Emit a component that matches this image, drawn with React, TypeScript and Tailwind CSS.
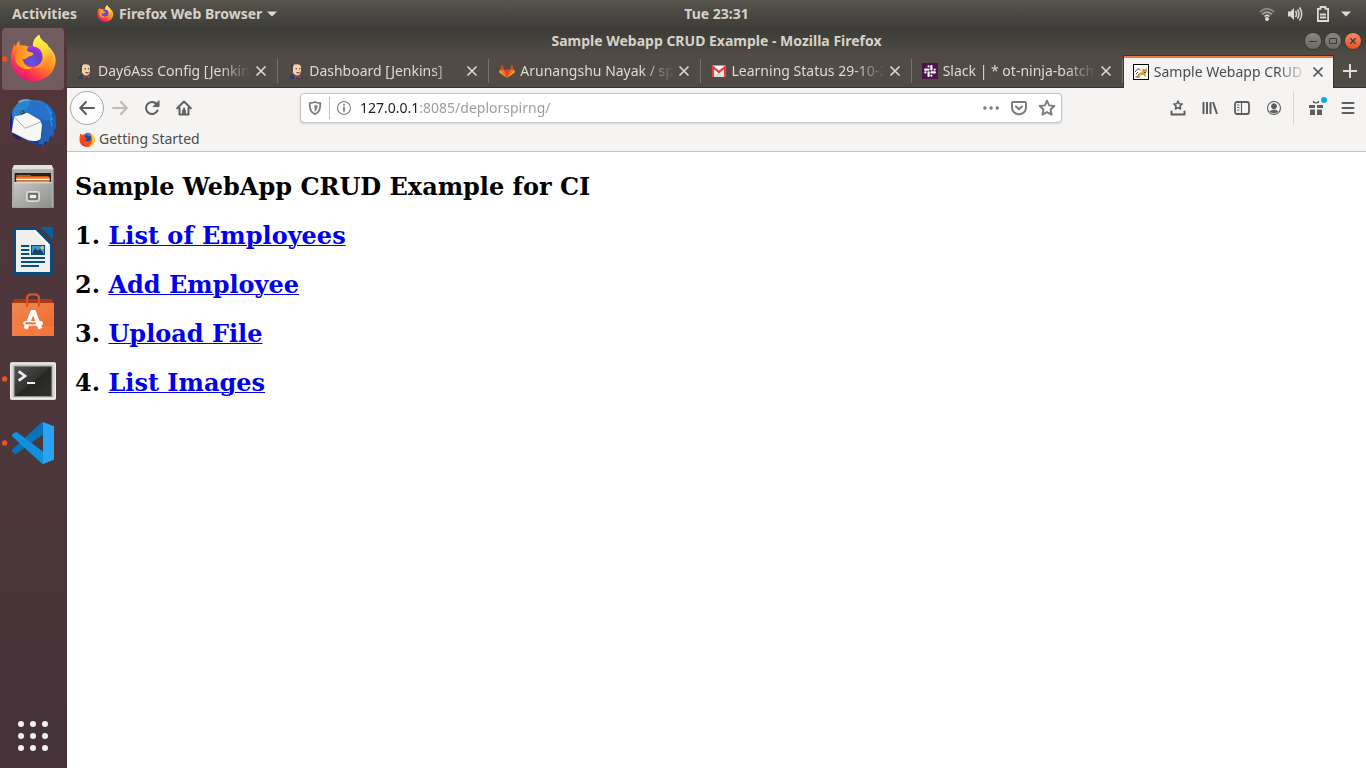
import React, { useState } from "react";

type IconProps = { className?: string };

function FirefoxArt({ id }: { id: string }) {
  return (
    <g>
      <defs>
        <linearGradient id={`${id}-body`} x1="0.85" y1="0.1" x2="0.3" y2="1">
          <stop offset="0" stopColor="#fff44f" />
          <stop offset="0.3" stopColor="#ffb52c" />
          <stop offset="0.55" stopColor="#ff7a25" />
          <stop offset="0.78" stopColor="#ff3750" />
          <stop offset="1" stopColor="#e3127c" />
        </linearGradient>
        <radialGradient id={`${id}-globe`} cx="0.45" cy="0.75" r="0.8">
          <stop offset="0" stopColor="#5b5be0" />
          <stop offset="0.55" stopColor="#6f38cf" />
          <stop offset="1" stopColor="#b833e1" />
        </radialGradient>
        <linearGradient id={`${id}-head`} x1="0" y1="0" x2="1" y2="0.3">
          <stop offset="0" stopColor="#ff7f1e" />
          <stop offset="1" stopColor="#ffb52c" />
        </linearGradient>
        <linearGradient id={`${id}-flame`} x1="0.3" y1="0" x2="0.6" y2="1">
          <stop offset="0" stopColor="#fff44f" />
          <stop offset="0.5" stopColor="#ffd83a" />
          <stop offset="1" stopColor="#ff7d25" />
        </linearGradient>
      </defs>
      <path
        d="M53 37C51 46 52 50 56 53C64 52 74 53 81 57L93 54C93 40 98 28 112 20C114 34 124 40 134 47C136 47 137 51 138 54C149 63 161 79 161 96C161 133 131 160 94 160C57 160 27 131 27 94C27 76 31 63 38 47L41 58C43 49 47 42 53 37Z"
        fill={`url(#${id}-body)`}
      />
      <circle cx="92" cy="85" r="31" fill={`url(#${id}-globe)`} />
      <path
        d="M112 20C100 27 91 41 93 55C111 58 122 70 122 87C122 103 110 115 96 118C117 122 142 114 150 92C154 85 152 74 149 69L147 78C145 67 138 53 134 47C126 40 114 35 112 20Z"
        fill={`url(#${id}-flame)`}
      />
      <path
        d="M56 53C64 52 74 54 79 60C71 63 75 70 84 72C89 73 95 74 94 79C90 85 82 84 75 90C69 93 67 95 61 93C63 109 74 118 91 119C77 128 48 122 40 98C38 84 43 73 49 69C46 62 48 57 56 53Z"
        fill={`url(#${id}-head)`}
      />
    </g>
  );
}

function FirefoxIcon() {
  return (
    <svg viewBox="24 18 142 144" className="size-[17px]" aria-hidden="true">
      <FirefoxArt id="ffmenu" />
    </svg>
  );
}

function FirefoxOldIcon() {
  return (
    <svg viewBox="0 0 16 16" className="size-4" aria-hidden="true">
      <circle cx="8.2" cy="8.2" r="5.5" fill="#1d48c4" />
      <path d="M6 2.5C8 1 12 1.5 13 4.500L9 5Z" fill="#1b8fe8" />
      <path d="M1.500 2.500L3 4C4 3 5.500 3.200 6.500 4L5.500 6.500L8 7L6.500 9C8 11 11 11 12 8C12 6 11.500 4 10 1.500C14 3 16 6 15.500 9.500C15 13.500 12 15.800 8 15.800C4 15.800.7 13 .5 9C.4 6 .8 4 1.500 2.500Z" fill="#ff4a16" />
      <path d="M10.500 1.500C14 3 16 6 15.500 9.500C15 12.500 13 15 10 15.500C14 12 14 6 10.500 1.500Z" fill="#ffd21f" />
      <path d="M1 10C2 14 6 16 10 15.300C6 15 3 13.500 1 10Z" fill="#e6163f" />
    </svg>
  );
}

function ThunderbirdArt() {
  return (
    <g>
      <defs>
        <linearGradient id="tb-blue" x1="0.2" y1="0" x2="0.8" y2="1">
          <stop offset="0" stopColor="#2a9fd8" />
          <stop offset="0.45" stopColor="#1f64c0" />
          <stop offset="1" stopColor="#1c2f7c" />
        </linearGradient>
      </defs>
      <path d="M54 30C66 22 78 20 87 26C123 18 153 43 162 72C168 104 153 145 116 164C109 163 104 158 96 157L30 122C19 104 17 76 32 56C36 47 43 36 54 30Z" fill="url(#tb-blue)" />
      <path d="M31 56C20 76 18 104 32 126L42 140L60 145L31 111Z" fill="#29206e" />
      <path d="M37 73L76 62L121 88L116 140C104 151 91 146 79 145L29 121Z" fill="#f7f7f5" />
      <path d="M38 76L69 109L121 88" fill="none" stroke="#9da0a6" strokeWidth="2.500" />
      <path d="M86 27C129 26 151 57 154 91C147 117 132 141 111 151C127 123 128 91 105 71C96 62 86 66 72 58Z" fill="#2770cb" />
      <path d="M112 79C126 105 124 132 108 158L117 155L121 161L130 147L139 151L144 133L154 134L157 112L163 109L160 68C151 86 135 93 112 79Z" fill="#2361b7" />
      <path d="M35 50C49 36 57 31 73 25C80 22 88 23 93 27C83 26 77 30 75 36C71 48 72 58 64 67C55 73 42 69 36 76C32 77 29 70 35 50Z" fill="#2b83cc" />
      <path d="M49 28C62 19 79 20 91 27C78 24 62 26 49 33Z" fill="#77b9d8" />
      <path d="M132 42L150 65L143 62L151 82L145 80L150 103" fill="none" stroke="#2990d5" strokeWidth="4" />
      <circle cx="62" cy="61" r="6" fill="#17305a" />
      <circle cx="61" cy="61" r="3" fill="#aa9256" />
    </g>
  );
}

function FilesArt() {
  return (
    <g>
      <defs>
        <linearGradient id="files-front" x1="0" y1="0" x2="1" y2="1">
          <stop offset="0" stopColor="#c6c6c4" />
          <stop offset="1" stopColor="#8d8d8b" />
        </linearGradient>
      </defs>
      <path d="M36 27H149L155 39V155H30V39Z" fill="#aeaeac" />
      <path d="M36 27H149L154 40H31Z" fill="#e2e2df" />
      <path d="M38 51H147V80H38Z" fill="#2c2019" />
      <path d="M43 57H84L88 60H140V69H43Z" fill="#c65a1a" />
      <path d="M43 64H143V69H43Z" fill="#f07b27" />
      <path d="M42 68H143V73H42Z" fill="#fff0d2" />
      <path d="M43 73H143V79H43Z" fill="#e58b43" />
      <path d="M36 79H149V155H36Z" fill="url(#files-front)" />
      <path d="M36 79H149V82H36Z" fill="#e5e5e2" />
      <rect x="74" y="107" width="38" height="29" rx="5" fill="#bcbcba" stroke="#e8e8e6" strokeWidth="3" />
      <rect x="81" y="114" width="24" height="15" fill="#eee" stroke="#4b4b49" strokeWidth="4" />
    </g>
  );
}

function WriterArt() {
  return (
    <g>
      <path d="M39 21H104L153 70V159Q153 165 147 165H39Q33 165 33 159V27Q33 21 39 21Z" fill="#0b4b78" />
      <path d="M114 21H147Q153 21 153 27V58Z" fill="#09629e" />
      <path d="M42 30H100L144 74V156H42Z" fill="#eeeeec" />
      <path d="M100 30L144 74L135 81L93 30Z" fill="#fff" />
      <g fill="#074f7f">
        <path d="M57 75H82V81H57ZM57 87H82V93H57ZM57 99H82V105H57ZM57 111H129V117H57ZM57 123H129V129H57ZM57 135H111V141H57Z" />
        <path d="M87 75H129V105H87Z" />
      </g>
      <path d="M90 78H126V102H90Z" fill="#3f9ad1" />
      <path d="M90 101L99 84L106 92L114 87L126 102Z" fill="#1b3e52" />
      <circle cx="121" cy="83" r="5" fill="#ecc543" />
    </g>
  );
}

function SoftwareArt() {
  return (
    <g>
      <defs>
        <linearGradient id="bag" x1="0" y1="0" x2="1" y2="1">
          <stop offset="0" stopColor="#ed8a56" />
          <stop offset="0.6" stopColor="#f07537" />
          <stop offset="1" stopColor="#ec6830" />
        </linearGradient>
      </defs>
      <path d="M37 45H149L156 58H30Z" fill="#a63b16" />
      <path d="M30 57H156V156H30Z" fill="url(#bag)" />
      <path d="M30 126H156V156H30Z" fill="#ff8a51" opacity=".35" />
      <path d="M75 68V44Q75 31 89 31H97Q111 31 111 44V68" fill="none" stroke="#dc5424" strokeWidth="7" />
      <g fill="none" stroke="#fff">
        <path d="M71 134L91 84H96L115 134" strokeWidth="12" />
        <path d="M71 118H116" strokeWidth="14" strokeLinecap="round" />
      </g>
      <path d="M70 118H101" stroke="#f07033" strokeWidth="6" />
    </g>
  );
}

function TerminalArt() {
  return (
    <g>
      <defs>
        <linearGradient id="term" x1="0" y1="0" x2="1" y2="1">
          <stop offset="0" stopColor="#555653" />
          <stop offset="0.5" stopColor="#323330" />
          <stop offset="0.51" stopColor="#262725" />
          <stop offset="1" stopColor="#30312f" />
        </linearGradient>
      </defs>
      <rect x="24" y="43" width="138" height="113" rx="5" fill="#d8d8d5" />
      <rect x="26" y="45" width="134" height="107" rx="3" fill="none" stroke="#f3f3f0" strokeWidth="3" />
      <rect x="35" y="53" width="116" height="94" fill="#8e8e8a" />
      <rect x="38" y="56" width="110" height="88" fill="url(#term)" />
      <path d="M50 70L69 84L50 98" fill="none" stroke="#eee" strokeWidth="8" />
      <path d="M75 105H99" stroke="#eee" strokeWidth="6" />
    </g>
  );
}

function CodeArt() {
  return (
    <g>
      <path d="M30 119V114L116 33L125 30V66L44 125L39 126L31 120Z" fill="#0873bb" />
      <path d="M30 72V67L41 60L45 61L125 120V156H121L30 73Z" fill="#1290dd" />
      <path d="M123 30L156 43V143L123 156Z" fill="#29a4f3" />
    </g>
  );
}

const dockApps: { name: string; art: React.ReactNode; running?: boolean; active?: boolean }[] = [
  { name: "Firefox Web Browser", art: <FirefoxArt id="ffdock" />, running: true, active: true },
  { name: "Thunderbird Mail", art: <ThunderbirdArt /> },
  { name: "Files", art: <FilesArt /> },
  { name: "LibreOffice Writer", art: <WriterArt /> },
  { name: "Ubuntu Software", art: <SoftwareArt /> },
  { name: "Terminal", art: <TerminalArt />, running: true },
  { name: "Visual Studio Code", art: <CodeArt />, running: true },
];

function Dock() {
  return (
    <nav aria-label="Dock" className="flex w-[67px] shrink-0 flex-col items-center justify-between bg-linear-to-b from-[#523539] via-[#4c373c] to-[#433338] pr-px pb-[13px]">
      <div className="flex flex-col gap-0.5">
        {dockApps.map((app) => (
          <button
            key={app.name}
            type="button"
            aria-label={app.name}
            className={app.active ? "size-[62px] rounded-sm bg-[#715b5f]" : "size-[62px] rounded-sm"}
          >
            <svg viewBox="0 0 186 186" className="size-full" aria-hidden="true">
              {app.running && <circle cx="8" cy="93" r="8" fill="#e95420" />}
              {app.art}
            </svg>
          </button>
        ))}
      </div>
      <button type="button" aria-label="Show Applications" className="size-[38px]">
        <svg viewBox="0 0 38 38" className="size-full" fill="#f2f1f0" aria-hidden="true">
          {[7, 19, 31].map((y) => [7, 19, 31].map((x) => <circle key={`${x}-${y}`} cx={x} cy={y} r="3" />))}
        </svg>
      </button>
    </nav>
  );
}

function TopBar() {
  return (
    <header className="flex h-7 items-center bg-linear-to-b from-[#57544c] to-[#3e3d39] pb-px text-[14px] leading-5 font-bold text-[#d6d2c9]">
      <div className="flex grow basis-[82px] items-center pl-3">
        <button type="button">Activities</button>
        <button type="button" className="ml-5 flex items-center gap-[5px] whitespace-nowrap">
          <FirefoxIcon />
          Firefox Web Browser
          <svg viewBox="0 0 10 6" className="h-1.5 w-2.5" fill="#dfdbd2" aria-hidden="true">
            <path d="M0 0.500H10L5 5.500Z" />
          </svg>
        </button>
      </div>
      <button type="button">Tue 23:31</button>
      <div className="flex grow basis-0 items-center justify-end pr-[15px]">
        <button type="button" aria-label="System menu" className="flex items-center gap-[10px]">
          <span className="flex items-center gap-3">
            <svg viewBox="0 0 16 16" className="size-4" fill="none" aria-hidden="true">
              <path d="M1 6Q8 -0.500 15 6" stroke="#8a8780" strokeWidth="1.800" />
              <path d="M3.300 8.300Q8 4 12.700 8.300" stroke="#aaa79f" strokeWidth="1.800" />
              <path d="M5.500 10.500Q8 8.300 10.500 10.500" stroke="#dfdbd2" strokeWidth="1.600" />
              <circle cx="8" cy="13" r="2" fill="#dfdbd2" />
            </svg>
            <svg viewBox="0 0 16 16" className="size-4" fill="none" stroke="#dfdbd2" strokeWidth="1.500" aria-hidden="true">
              <path d="M1 5.500H3.500L7 2V14L3.500 10.500H1Z" fill="#dfdbd2" stroke="none" />
              <path d="M8.500 5Q10.500 8 8.500 11M10.500 3.500Q13.500 8 10.500 12.500M12.500 1.500Q17 8 12.500 14.500" />
            </svg>
            <svg viewBox="0 0 16 16" className="size-4" fill="none" stroke="#dfdbd2" strokeWidth="1.800" aria-hidden="true">
              <path d="M2.900 2.900H5.500V1H10.500V2.900H13.100V15H2.900Z" />
              <path d="M5 8.500H11M5 11.500H11" strokeWidth="2" />
            </svg>
          </span>
          <svg viewBox="0 0 10 6" className="h-1.5 w-2.5" fill="#dfdbd2" aria-hidden="true">
            <path d="M0 0.500H10L5 5.500Z" />
          </svg>
        </button>
      </div>
    </header>
  );
}

function JenkinsIcon() {
  return (
    <svg viewBox="0 0 16 16" className="size-4 shrink-0" aria-hidden="true">
      <path d="M.5 16C1 13.500 3 12 5 11.500L12 12C14 12.500 15 14 15 16Z" fill="#2b4556" />
      <path d="M3.500 5C3 1.500 6 .7 9 .8C12.500 1 14 3 13.500 6C13.500 9 12.500 13 9.500 13C6 13 4 10 3.500 5Z" fill="#efd0b1" stroke="#4b3b30" strokeWidth=".9" />
      <path d="M3 6C2.500 3 3.500 1 6.500 .6C5 2 5.500 3.500 4.800 5L5 9L3.800 8Z" fill="#4a3b2e" />
      <path d="M6.500 12L9.500 14L13 12.200V15.500L9.500 14L7 16Z" fill="#d33833" />
      <path d="M7.500 5.800H9M11 5.800H12.300M8.500 9.500Q10 10.500 11.500 9.500" stroke="#3b2b22" strokeWidth="1" fill="none" />
    </svg>
  );
}

function GitlabIcon() {
  return (
    <svg viewBox="0 0 16 16" className="size-4 shrink-0" aria-hidden="true">
      <path d="M8 15L5 6.500H11Z" fill="#e24329" />
      <path d="M8 15L5 6.500H1ZM8 15L11 6.500H15Z" fill="#fc6d26" />
      <path d="M8 15L1 6.500L0 9.200ZM8 15L15 6.500L16 9.200Z" fill="#fca326" />
      <path d="M1 6.500H5L3.200 1ZM15 6.500H11L12.800 1Z" fill="#e24329" />
    </svg>
  );
}

function GmailIcon() {
  return (
    <svg viewBox="0 0 16 16" className="size-4 shrink-0" aria-hidden="true">
      <rect x="1" y="2.500" width="14" height="11.500" rx="1" fill="#f1f1f1" />
      <path d="M3 14L8 9L13 14Z" fill="#d9d9d9" />
      <path d="M2 14V4L8 9L14 4V14" fill="none" stroke="#db4437" strokeWidth="2.200" />
    </svg>
  );
}

function SlackIcon() {
  return (
    <svg viewBox="0 0 16 16" className="size-4 shrink-0" aria-hidden="true">
      <rect width="16" height="16" fill="#4a154b" />
      <g stroke="#fff" strokeWidth="2.200" strokeLinecap="round">
        <path d="M6.600 6.600H3.100M9.400 6.600V3.100M9.400 9.400H12.900M6.600 9.400V12.900" />
        <path d="M6.600 3.300V3.400M12.700 6.600H12.600M9.400 12.700V12.600M3.300 9.400H3.400" />
      </g>
    </svg>
  );
}

function TomcatIcon() {
  return (
    <svg viewBox="0 0 16 16" className="size-4 shrink-0" aria-hidden="true">
      <rect x=".5" y=".5" width="15" height="15" fill="#fff" stroke="#000" />
      <path d="M3.500 12.500L5.500 9.500L9 8L9.500 4L11 5.200H12.700L14 3.500V7.500L12.500 9L13 12.500H11.500L10.500 11L8 11L6 13Z" fill="#d2a43b" />
      <path d="M2 8L4 5.500C5.500 4.500 7 5 8 6.500M3 10L5 8M2.500 13H6.500M10.800 6.500H11.200M12.800 6.500H13.200M11 8.500H13" fill="none" stroke="#4a4030" strokeWidth=".9" />
    </svg>
  );
}

const tabs = [
  { title: "Day6Ass Config [Jenkins]", Icon: JenkinsIcon },
  { title: "Dashboard [Jenkins]", Icon: JenkinsIcon },
  { title: "Arunangshu Nayak / spring", Icon: GitlabIcon },
  { title: "Learning Status 29-10-2019", Icon: GmailIcon },
  { title: "Slack | * ot-ninja-batch-9", Icon: SlackIcon },
  { title: "Sample Webapp CRUD Example", Icon: TomcatIcon, active: true },
];

function CloseIcon() {
  return (
    <svg viewBox="0 0 12 12" className="size-3" fill="none" stroke="currentColor" strokeWidth="1.600" aria-hidden="true">
      <path d="M1.500 1.500L10.500 10.500M10.500 1.500L1.500 10.500" />
    </svg>
  );
}

function TabStrip() {
  return (
    <div className="flex h-[33px] bg-[#504c45]">
      <div className="grid min-w-0 flex-1 grid-cols-6">
        {tabs.map(({ title, Icon, active }) => (
          <div
            key={title}
            className={
              active
                ? "flex min-w-0 border-x border-t border-[#353430] bg-[#f5f4f3] text-[#4c4c4c]"
                : "flex min-w-0 border-b border-[#353430] text-[#dfdbd2]"
            }
          >
            <div className={active ? "flex min-w-0 flex-1 items-center border-t-2 border-[#f07746] px-[9px] pb-0.5" : "flex min-w-0 flex-1 items-center px-[10px]"}>
              <button type="button" className="flex min-w-0 flex-1 items-center gap-[5px]">
                <Icon />
                <span className="min-w-0 flex-1 overflow-hidden mask-r-from-80% text-left text-[14px] leading-5 whitespace-nowrap">{title}</span>
              </button>
              <button type="button" aria-label={`Close ${title}`} className="ml-1 shrink-0">
                <CloseIcon />
              </button>
            </div>
            {!active && <span className="my-1 w-px self-stretch bg-[#77736b]" />}
          </div>
        ))}
      </div>
      <button type="button" aria-label="Open a new tab" className="flex w-8 shrink-0 items-center justify-center border-b border-[#353430] text-[#dfdbd2]">
        <svg viewBox="0 0 14 14" className="size-3.5" stroke="currentColor" strokeWidth="2" aria-hidden="true">
          <path d="M7 0V14M0 7H14" />
        </svg>
      </button>
    </div>
  );
}

function Glyph({ children, className = "size-4" }: IconProps & { children: React.ReactNode }) {
  return (
    <svg viewBox="0 0 16 16" className={className} fill="none" stroke="currentColor" strokeWidth="2" strokeLinecap="round" strokeLinejoin="round" aria-hidden="true">
      {children}
    </svg>
  );
}

function ToolButton({ label, children, className = "text-[#5e5e5e]" }: { label: string; children: React.ReactNode; className?: string }) {
  return (
    <button type="button" aria-label={label} className={`flex size-8 shrink-0 items-center justify-center ${className}`}>
      <Glyph>{children}</Glyph>
    </button>
  );
}

const starPath = "M8 1.500L9.900 5.700L14.500 6.200L11.100 9.300L12.100 14L8 11.600L3.900 14L4.900 9.300L1.500 6.200L6.100 5.700Z";

function NavBar() {
  const [url, setUrl] = useState("127.0.0.1:8085/deplorspirng/");
  return (
    <div className="flex h-10 items-center pr-[2px] pl-[3px]">
      <button type="button" aria-label="Back" className="flex size-[34px] shrink-0 items-center justify-center rounded-full border border-[#a9a8a6] bg-[#fcfcfc] text-[#5e5e5e]">
        <Glyph><path d="M15 8H1.500M7 2L1.200 8L7 14" /></Glyph>
      </button>
      <div className="flex">
        <ToolButton label="Forward" className="text-[#bdbcbb]"><path d="M1 8H14.500M9 2L14.800 8L9 14" /></ToolButton>
        <ToolButton label="Reload">
          <path d="M13.500 10.500A6 6 0 1 1 12.500 4" />
          <path d="M15 1V6.500H9.500Z" fill="currentColor" strokeWidth="1" />
        </ToolButton>
        <ToolButton label="Home">
          <path d="M1.200 8.200L8 1.500L14.800 8.200M3.500 8V14.500H12.500V8" />
          <path d="M8 8.500H8.200M7 14V10.500H9V14" strokeWidth="1.800" />
        </ToolButton>
      </div>
      <div className="flex-5" />
      <div className="flex h-[30px] flex-38 items-center rounded-[4px] border border-[#c4c3c1] bg-white text-[#7b7b7b] shadow-sm">
        <button type="button" aria-label="Tracking protection" className="flex w-7 shrink-0 justify-center">
          <Glyph>
            <path d="M8 2C10 2.800 11.800 3 13.300 3.200C13.300 9 12.500 12 8 14.300C3.500 12 2.700 9 2.700 3.200C4.200 3 6 2.800 8 2Z" strokeWidth="1.800" />
            <path d="M8 5.200C9.500 5.500 10.300 5.600 10.300 5.600C10.300 8.500 9.500 10.300 8 11.300Z" fill="currentColor" strokeWidth=".5" />
          </Glyph>
        </button>
        <span className="h-[22px] w-px shrink-0 bg-[#c4c3c1]" />
        <button type="button" aria-label="Site information" className="flex w-7 shrink-0 justify-center">
          <Glyph>
            <circle cx="8" cy="8" r="6.500" strokeWidth="1.100" />
            <path d="M8 7.500V11M8 4.700V4.800" strokeWidth="1.800" />
          </Glyph>
        </button>
        <input
          type="text"
          aria-label="Address"
          value={url}
          spellCheck={false}
          onChange={(event) => setUrl(event.target.value)}
          className="min-w-0 flex-1 bg-linear-to-r from-[#1c1c1c] from-[60px] to-[#9b9a99] to-[60px] bg-clip-text pl-0.5 text-[14px] leading-5 text-transparent caret-black outline-none"
        />
        <button type="button" aria-label="Page actions" className="flex w-7 shrink-0 justify-center">
          <Glyph className="size-[18px]"><path d="M2.500 8H2.600M8 8H8.100M13.500 8H13.600" strokeWidth="3" /></Glyph>
        </button>
        <button type="button" aria-label="Save to Pocket" className="flex w-7 shrink-0 justify-center">
          <Glyph>
            <path d="M2 2H14Q15 2 15 3V7.500A7 6.800 0 0 1 1 7.500V3Q1 2 2 2Z" />
            <path d="M5 6.500L8 9.300L11 6.500" />
          </Glyph>
        </button>
        <button type="button" aria-label="Bookmark this page" className="flex w-7 shrink-0 justify-center">
          <Glyph className="size-[18px]"><path d={starPath} strokeWidth="1.700" /></Glyph>
        </button>
      </div>
      <div className="flex-5" />
      <ToolButton label="Bookmarks menu">
        <path d="M8 1L9.200 3.700L12.200 4L10 6L10.600 9L8 7.600L5.400 9L6 6L3.800 4L6.800 3.700Z" strokeWidth="1.500" />
        <path d="M1.500 11.500V14.500H14.500V11.500" />
      </ToolButton>
      <ToolButton label="Library"><path d="M1.500 2V14M5 2V14M8.500 2V14M11 2L15 14" strokeLinecap="butt" /></ToolButton>
      <ToolButton label="Sidebars">
        <rect x="1" y="2" width="14" height="12" rx="2" strokeWidth="1.800" />
        <path d="M7.500 2V14M3.500 5H5M3.500 7.500H5M3.500 10H5" strokeWidth="1.100" />
      </ToolButton>
      <ToolButton label="Account">
        <circle cx="8" cy="8" r="6.500" strokeWidth="1.100" />
        <circle cx="8" cy="6.300" r="2.500" fill="currentColor" strokeWidth="1" />
        <path d="M4.300 11.500Q8 8.500 11.700 11.500Q8 14.500 4.300 11.500Z" fill="currentColor" strokeWidth="1" />
      </ToolButton>
      <span className="mr-1.5 ml-[3px] h-[34px] w-px shrink-0 bg-[#d5d4d2]" />
      <span className="relative">
        <ToolButton label="What's new">
          <path d="M1 5H7V8H1ZM9 5H15V8H9ZM2 9.500H7V15H2ZM9 9.500H14V15H9ZM5 0.500L8 2.500L11 0.500V3L8 3.500L5 3Z" fill="currentColor" stroke="none" />
        </ToolButton>
        <span className="absolute top-[5px] right-[5px] size-1.5 rounded-full bg-[#00a8f5]" />
      </span>
      <ToolButton label="Open menu"><path d="M2.500 3H13.500M2.500 8H13.500M2.500 13H13.500" /></ToolButton>
    </div>
  );
}

function WindowButtons() {
  return (
    <div className="flex grow basis-0 items-center justify-end gap-1 pr-[5px]">
      <button type="button" aria-label="Minimize" className="size-4 rounded-full bg-linear-to-b from-[#8a8780] to-[#6b6962] text-[#3c3b37] ring-1 ring-[#3a3935]">
        <svg viewBox="0 0 16 16" className="size-4" fill="none" stroke="currentColor" aria-hidden="true"><path d="M4 8.500H12" /></svg>
      </button>
      <button type="button" aria-label="Maximize" className="size-4 rounded-full bg-linear-to-b from-[#8a8780] to-[#6b6962] text-[#3c3b37] ring-1 ring-[#3a3935]">
        <svg viewBox="0 0 16 16" className="size-4" fill="none" stroke="currentColor" aria-hidden="true"><path d="M4.500 5.500H11.500V10.500H4.500Z" /></svg>
      </button>
      <button type="button" aria-label="Close window" className="size-4 rounded-full bg-linear-to-b from-[#f58862] to-[#e5501f] text-[#3c3b37] ring-1 ring-[#3a3935]">
        <svg viewBox="0 0 16 16" className="size-4" fill="none" stroke="currentColor" strokeWidth="1.300" aria-hidden="true"><path d="M5.300 5.300L10.700 10.700M10.700 5.300L5.300 10.700" /></svg>
      </button>
    </div>
  );
}

const pageLinks = ["List of Employees", "Add Employee", "Upload File", "List Images"];

export default function App() {
  return (
    <div className="flex min-h-screen flex-col font-['Noto_Sans',sans-serif]">
      <TopBar />
      <div className="flex flex-1">
        <Dock />
        <div className="flex min-w-0 flex-1 flex-col bg-white">
          <div className="flex h-[27px] items-center bg-linear-to-b from-[#3b3a36] to-[#504c45] pb-px text-[14px] leading-5 font-bold text-[#d6d2c9]">
            <div className="grow basis-0 pl-[5px]" />
            <div className="whitespace-nowrap">Sample Webapp CRUD Example - Mozilla Firefox</div>
            <WindowButtons />
          </div>
          <TabStrip />
          <div className="border-b border-[#c4c3c1] bg-[#f5f4f3]">
            <NavBar />
            <div className="flex h-[23px] items-center pb-px pl-3 text-[14px] leading-5 text-[#4c4c4c]">
              <a href="#getting-started" className="flex items-center gap-1">
                <FirefoxOldIcon />
                Getting Started
              </a>
            </div>
          </div>
          <main className="flex flex-col gap-5 px-2 pt-5 font-['DejaVu_Serif',serif] text-[24px] leading-[29px] font-bold text-black">
            <h2>Sample WebApp CRUD Example for CI</h2>
            {pageLinks.map((label, index) => (
              <h2 key={label}>
                {index + 1}. <a href={`#link-${index + 1}`} className="text-[#0000ee] underline decoration-1">{label}</a>
              </h2>
            ))}
          </main>
        </div>
      </div>
    </div>
  );
}
